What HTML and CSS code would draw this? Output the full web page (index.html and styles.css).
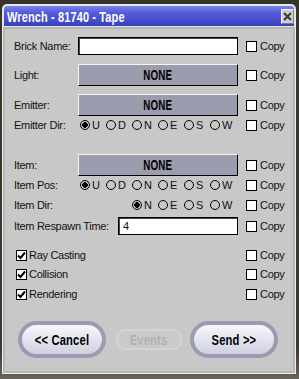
FILE: index.html
```html
<!DOCTYPE html>
<html lang="en">

<head>
    <meta charset="UTF-8">
    <title>Wrench - 81740 - Tape</title>
    <link rel="stylesheet" href="styles.css">
</head>

<body>
    <div class="window">
        <div class="titlebar">
            <span class="title">Wrench - 81740 - Tape</span>
            <span class="close">
                <svg width="9" height="9" viewBox="0 0 9 9"><path d="M1 1L8 8M8 1L1 8" stroke="#3c3c3c" stroke-width="2.2"/></svg>
            </span>
        </div>
        <div class="content">
            <div class="row r-name">
                <span class="lbl">Brick Name:</span>
                <div class="field"></div>
                <span class="copy"><span class="box"></span>Copy</span>
            </div>
            <div class="row big r-light">
                <span class="lbl">Light:</span>
                <div class="pick"><span class="nar">NONE</span></div>
                <span class="copy"><span class="box"></span>Copy</span>
            </div>
            <div class="row big r-emitter">
                <span class="lbl">Emitter:</span>
                <div class="pick"><span class="nar">NONE</span></div>
                <span class="copy"><span class="box"></span>Copy</span>
            </div>
            <div class="row">
                <span class="lbl">Emitter Dir:</span>
                <div class="radios">
                    <span class="radio"><span class="dot on"></span>U</span>
                    <span class="radio"><span class="dot"></span>D</span>
                    <span class="radio"><span class="dot"></span>N</span>
                    <span class="radio"><span class="dot"></span>E</span>
                    <span class="radio"><span class="dot"></span>S</span>
                    <span class="radio"><span class="dot"></span>W</span>
                </div>
                <span class="copy"><span class="box"></span>Copy</span>
            </div>
            <div class="row big r-item">
                <span class="lbl">Item:</span>
                <div class="pick"><span class="nar">NONE</span></div>
                <span class="copy"><span class="box"></span>Copy</span>
            </div>
            <div class="row">
                <span class="lbl">Item Pos:</span>
                <div class="radios">
                    <span class="radio"><span class="dot on"></span>U</span>
                    <span class="radio"><span class="dot"></span>D</span>
                    <span class="radio"><span class="dot"></span>N</span>
                    <span class="radio"><span class="dot"></span>E</span>
                    <span class="radio"><span class="dot"></span>S</span>
                    <span class="radio"><span class="dot"></span>W</span>
                </div>
                <span class="copy"><span class="box"></span>Copy</span>
            </div>
            <div class="row r-dir">
                <span class="lbl">Item Dir:</span>
                <div class="radios skip2">
                    <span class="radio"><span class="dot on"></span>N</span>
                    <span class="radio"><span class="dot"></span>E</span>
                    <span class="radio"><span class="dot"></span>S</span>
                    <span class="radio"><span class="dot"></span>W</span>
                </div>
                <span class="copy"><span class="box"></span>Copy</span>
            </div>
            <div class="row r-respawn">
                <span class="lbl long">Item Respawn Time:</span>
                <div class="field short">4</div>
                <span class="copy"><span class="box"></span>Copy</span>
            </div>
            <div class="row r-ray">
                <span class="check"><span class="box ticked"><svg width="9" height="9" viewBox="0 0 9 9"><path d="M1 4.5L3.5 7L8 1.5" fill="none" stroke="#000" stroke-width="2"/></svg></span>Ray Casting</span>
                <span class="copy"><span class="box"></span>Copy</span>
            </div>
            <div class="row r-coll">
                <span class="check"><span class="box ticked"><svg width="9" height="9" viewBox="0 0 9 9"><path d="M1 4.5L3.5 7L8 1.5" fill="none" stroke="#000" stroke-width="2"/></svg></span>Collision</span>
                <span class="copy"><span class="box"></span>Copy</span>
            </div>
            <div class="row r-rend">
                <span class="check"><span class="box ticked"><svg width="9" height="9" viewBox="0 0 9 9"><path d="M1 4.5L3.5 7L8 1.5" fill="none" stroke="#000" stroke-width="2"/></svg></span>Rendering</span>
                <span class="copy"><span class="box"></span>Copy</span>
            </div>
            <div class="buttons">
                <button class="pill"><span class="nar">&lt;&lt; Cancel</span></button>
                <button class="events" disabled><span class="nar">Events</span></button>
                <button class="pill"><span class="nar">Send &gt;&gt;</span></button>
            </div>
        </div>
    </div>
</body>

</html>
```

FILE: styles.css
```css
body {
    margin: 0;
    width: 299px;
    height: 379px;
    overflow: hidden;
    background: linear-gradient(#36352a 0, #3c3a2d 92%, #6a6458 100%);
    font-family: "Liberation Sans", Arial, sans-serif;
    font-size: 11px;
    letter-spacing: -0.3px;
    color: #111;
}

.window {
    margin: 4px 0 0 2px;
    width: 294px;
    height: 370px;
    display: flex;
    flex-direction: column;
}

.titlebar {
    height: 23px;
    box-sizing: border-box;
    border: 2px solid #e6e6ee;
    border-bottom: 1px solid #e6e6ee;
    border-radius: 5px 5px 0 0;
    background: linear-gradient(#7884e8, #525ad8 35%, #464ecf 70%, #3a40b2);
    display: flex;
    align-items: center;
    justify-content: space-between;
    padding: 0 0 0 3px;
}

/* narrow bold face, squeezed from Liberation Sans */
.title,
.nar {
    display: inline-block;
    font-family: "Liberation Sans", Arial, sans-serif;
    font-weight: bold;
    letter-spacing: 0.2px;
}

.title {
    font-size: 15px;
    color: #fff;
    transform: scaleX(0.73);
    transform-origin: left center;
    white-space: nowrap;
}

.nar {
    transform: scaleX(0.8);
    white-space: nowrap;
}

.close {
    width: 13px;
    height: 15px;
    box-sizing: border-box;
    background: #cfcfd4;
    border: 1px solid;
    border-color: #f4f4f4 #7a7a7a #7a7a7a #f4f4f4;
    display: flex;
    align-items: center;
    justify-content: center;
}

.content {
    flex: 1;
    background: #c8c8c8;
    border: 1px solid #eeeeee;
    border-top: none;
    box-shadow: inset 2px 2px 0 #b6b6b6, inset -2px -2px 0 #b6b6b6;
    padding: 10px 0 0 11px;
    display: flex;
    flex-direction: column;
}

.row {
    display: flex;
    align-items: center;
    height: 18px;
}

.row.big {
    height: 22px;
}

.r-light { margin-top: 9px; }
.r-emitter { margin-top: 8px; }
.r-item { margin-top: 20px; }
.r-dir { margin-top: 2px; }
.r-respawn { margin-top: 3px; }
.r-ray { margin-top: 11px; }
.r-coll { margin-top: 1px; }
.r-rend { margin-top: 2px; }

.lbl {
    width: 64px;
    flex: none;
}

.lbl.long {
    width: 104px;
}

.field {
    width: 160px;
    height: 18px;
    box-sizing: border-box;
    background: #fff;
    border: 1px solid #000;
    box-shadow: inset 1px 1px 0 #444;
    padding: 2px 0 0 4px;
}

.field.short {
    width: 120px;
}

.pick {
    width: 160px;
    height: 22px;
    box-sizing: border-box;
    background: #9b9dae;
    border: 1px solid;
    border-color: #f6f6f6 #000 #000 #f6f6f6;
    display: flex;
    align-items: center;
    justify-content: center;
    font-size: 14px;
    color: #000;
}

.pick .nar {
    transform: scaleX(0.7);
}

.radios {
    width: 160px;
    box-sizing: border-box;
    padding-left: 2px;
    display: flex;
}

.radios.skip2 {
    padding-left: 54px;
}

.radio {
    width: 26px;
    display: flex;
    align-items: center;
    gap: 2px;
}

.dot {
    width: 10px;
    height: 10px;
    box-sizing: border-box;
    border: 1px solid #000;
    border-radius: 50%;
}

.dot.on {
    background: radial-gradient(circle, #000 2.6px, transparent 3px);
}

.copy {
    margin-left: 8px;
    display: flex;
    align-items: center;
    gap: 3px;
}

.box {
    width: 11px;
    height: 11px;
    box-sizing: border-box;
    border: 1px solid #000;
    background: #fff;
    display: flex;
    align-items: center;
    justify-content: center;
}

.check {
    width: 222px;
    margin-left: 2px;
    display: flex;
    align-items: center;
    gap: 2px;
}

.buttons {
    margin: 18px 0 0 4px;
    display: flex;
    align-items: center;
}

.buttons button {
    font-family: "Liberation Sans", Arial, sans-serif;
    font-size: 14px;
    padding: 0;
}

.pill {
    width: 88px;
    height: 37px;
    border: 4px solid #9a9bb0;
    border-radius: 19px;
    background: linear-gradient(#f6f6fb, #e2e2ee 55%, #cfcfdf);
    color: #000;
}

.pill .nar {
    transform: scaleX(0.8);
}

.events {
    width: 66px;
    height: 21px;
    margin: 0 8px 0 10px;
    border: 2px solid #d4d4d8;
    border-radius: 9px;
    background: #cacaca;
    color: #b2b2b2;
}
```
